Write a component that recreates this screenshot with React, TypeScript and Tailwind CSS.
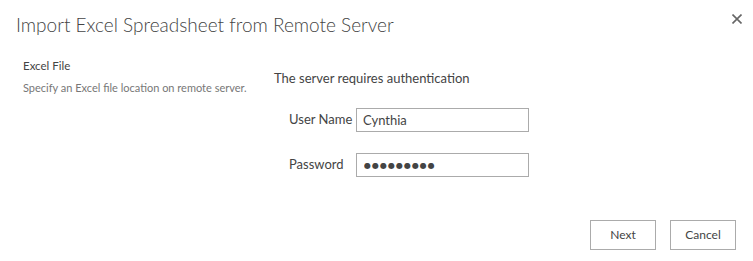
import React from 'react';

export default function App() {
  return (
    <div className="w-[753px] h-[261px] bg-white text-[#444444] flex flex-col font-['Lato',_'Liberation_Sans',_sans-serif]">
      <div className="flex justify-between items-start pl-[16px] pr-[11px] pt-[11px] h-[50px]">
        <h1 className="text-[19px] font-light leading-[28px]">
          Import Excel Spreadsheet from Remote Server
        </h1>
        <button className="mt-[3px] w-[10px] h-[10px] flex items-center justify-center">
          <svg width="10" height="10" viewBox="0 0 10 10">
            <path d="M0.5 0.5 L9.5 9.5 M9.5 0.5 L0.5 9.5" stroke="#666666" strokeWidth="1.6" />
          </svg>
        </button>
      </div>

      <div className="flex">
        <div className="w-[274px] shrink-0 pl-[23px]">
          <div className="text-[11.5px] leading-[16px] mt-[8px]">Excel File</div>
          <div className="text-[11px] leading-[14px] text-[#777777] mt-[7px]">
            Specify an Excel file location on remote server.
          </div>
        </div>

        <div className="flex-1">
          <div className="text-[13px] leading-[18px] mt-[19px]">The server requires authentication</div>
          <div className="pl-[15px] mt-[21px] flex flex-col gap-[21px]">
            <div className="flex items-center">
              <label className="w-[67px] whitespace-nowrap text-[13px]">User Name</label>
              <input
                className="w-[173px] h-[24px] border border-[#ababab] px-[6px] text-[13px] text-[#444444] outline-none font-['Lato',_sans-serif]"
                defaultValue="Cynthia"
              />
            </div>
            <div className="flex items-center">
              <label className="w-[67px] whitespace-nowrap text-[13px]">Password</label>
              <input
                readOnly
                className="w-[173px] h-[24px] border border-[#ababab] px-[7px] text-[8px] tracking-[1px] text-[#444444] outline-none font-['DejaVu_Sans',_sans-serif]"
                defaultValue="●●●●●●●●●"
              />
            </div>
          </div>
        </div>
      </div>

      <div className="flex justify-end gap-[14px] pr-[17px] mt-auto mb-[11px]">
        <button className="w-[66px] h-[30px] border border-[#ababab] bg-white text-[12px] text-[#444444]">Next</button>
        <button className="w-[66px] h-[30px] border border-[#ababab] bg-white text-[12px] text-[#444444]">Cancel</button>
      </div>
    </div>
  );
}
